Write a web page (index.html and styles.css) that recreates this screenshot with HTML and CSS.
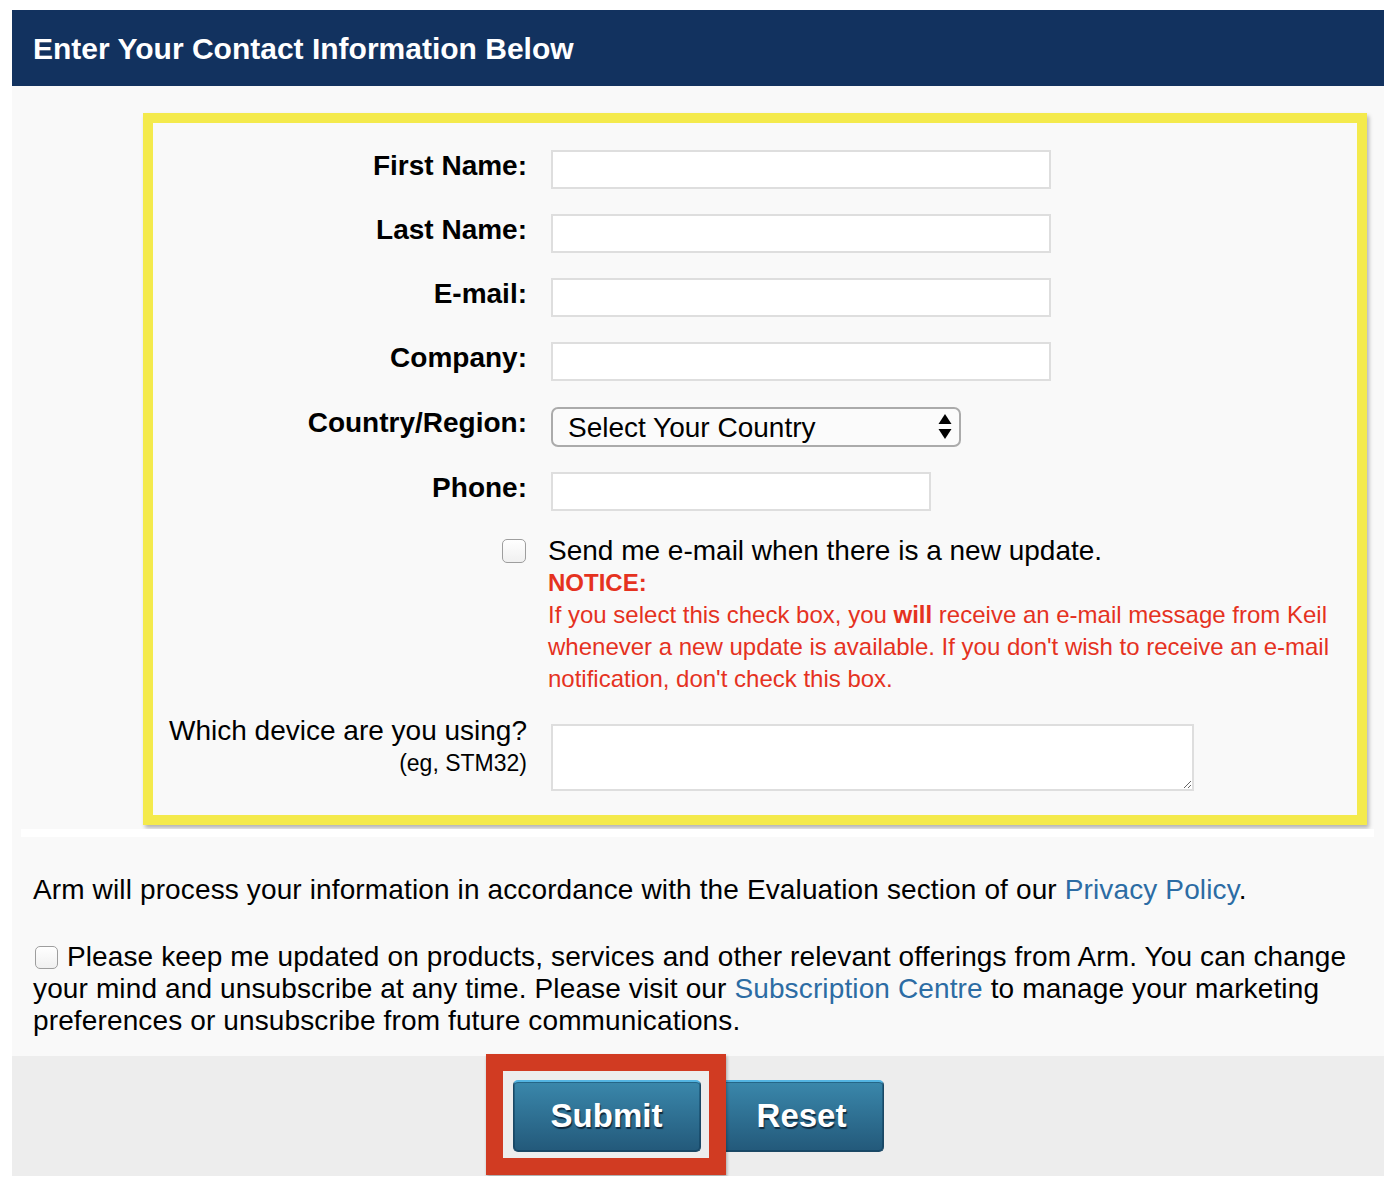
FILE: index.html
```html
<!DOCTYPE html>
<html lang="en">
<head>
<meta charset="utf-8">
<title>Contact Information</title>
<link rel="stylesheet" href="styles.css">
</head>
<body>
<div class="page">
  <div class="header"><h1 class="title">Enter Your Contact Information Below</h1></div>
  <div class="content">
    <div class="form-area">
      <div class="highlight">
        <div class="row">
          <label class="label" for="fn">First Name:</label>
          <input id="fn" class="text-input" type="text">
        </div>
        <div class="row">
          <label class="label" for="ln">Last Name:</label>
          <input id="ln" class="text-input" type="text">
        </div>
        <div class="row">
          <label class="label" for="em">E-mail:</label>
          <input id="em" class="text-input" type="text">
        </div>
        <div class="row">
          <label class="label" for="co">Company:</label>
          <input id="co" class="text-input" type="text">
        </div>
        <div class="row row-select">
          <label class="label" for="cr">Country/Region:</label>
          <div class="select-wrap">
            <select id="cr" class="select"><option>Select Your Country</option></select>
            <svg class="select-arrows" width="14" height="26" viewBox="0 0 14 26"><path d="M7 0 L13.5 10 L0.5 10 Z" fill="#000"/><path d="M0.5 15 L13.5 15 L7 25 Z" fill="#000"/></svg>
          </div>
        </div>
        <div class="row">
          <label class="label" for="ph">Phone:</label>
          <input id="ph" class="text-input phone" type="text">
        </div>
        <div class="row row-check">
          <div class="label check-cell"><input class="checkbox" type="checkbox" id="upd"></div>
          <div class="check-text">
            <label class="check-label" for="upd">Send me e-mail when there is a new update.</label>
            <div class="notice-title">NOTICE:</div>
            <div class="notice">If you select this check box, you <b>will</b> receive an e-mail message from Keil whenever a new update is available. If you don't wish to receive an e-mail notification, don't check this box.</div>
          </div>
        </div>
        <div class="row row-device">
          <label class="label device-label" for="dv">Which device are you using?<span class="hint">(eg, STM32)</span></label>
          <textarea id="dv" class="textarea"></textarea>
        </div>
      </div>
      <div class="white-strip"></div>
    </div>
    <p class="policy">Arm will process your information in accordance with the Evaluation section of our <a class="link" href="#">Privacy Policy</a>.</p>
    <p class="consent"><input class="checkbox small" type="checkbox"> Please keep me updated on products, services and other relevant offerings from Arm. You can change your mind and unsubscribe at any time. Please visit our <a class="link" href="#">Subscription Centre</a> to manage your marketing preferences or unsubscribe from future communications.</p>
  </div>
  <div class="footer">
    <div class="submit-wrap">
      <button class="btn btn-submit" type="button">Submit</button>
      <div class="red-box"></div>
    </div>
    <button class="btn btn-reset" type="button">Reset</button>
  </div>
</div>
</body>
</html>
```

FILE: styles.css
```css
html, body {
  margin: 0;
  padding: 0;
  background: #ffffff;
}

body {
  font-family: "Liberation Sans", Arial, Helvetica, sans-serif;
  color: #000;
}

.page {
  width: 1372px;
  margin: 10px 0 0 12px;
}

.header {
  background: #12325f;
  height: 76px;
  padding-left: 21px;
}

.title {
  margin: 0;
  color: #fff;
  font-size: 30px;
  font-weight: bold;
  line-height: 78px;
}

.content {
  background: #f9f9f9;
  padding: 27px 21px 19px 21px;
}

.form-area {
  margin: 0 -11px 0 -12px;
}

.highlight {
  margin-left: 122px;
  width: 1224px;
  box-sizing: border-box;
  border: 10px solid #f4ea4c;
  padding: 27px 0 24px 0;
  background: #f9f9f9;
  box-shadow: 2px 3px 4px rgba(0, 0, 0, 0.28);
}

.white-strip {
  margin-top: 4px;
  height: 8px;
  background: #ffffff;
}

.row {
  display: flex;
  align-items: flex-start;
  gap: 24px;
}

.row + .row {
  margin-top: 25px;
}

.row.row-select {
  margin-top: 26px;
}

.row.row-check {
  margin-top: 24px;
}

.row.row-device {
  margin-top: 20px;
}

.label {
  flex: none;
  width: 374px;
  text-align: right;
  font-weight: bold;
  font-size: 28px;
  line-height: 32px;
}

.text-input {
  box-sizing: border-box;
  width: 500px;
  height: 39px;
  border: 2px solid #dedede;
  background: #fff;
  margin: 0;
  padding: 0 8px;
  font-size: 24px;
  font-family: inherit;
  outline: none;
}

.text-input.phone {
  width: 380px;
}

.select-wrap {
  position: relative;
  width: 410px;
  height: 40px;
}

.select {
  -webkit-appearance: none;
  appearance: none;
  box-sizing: border-box;
  width: 410px;
  height: 40px;
  margin: 0;
  border: 2px solid #ababab;
  border-radius: 7px;
  background: #fbfbfb;
  padding: 0 0 0 15px;
  font-family: inherit;
  font-size: 28px;
  color: #000;
  outline: none;
}

.select-arrows {
  position: absolute;
  right: 9px;
  top: 7px;
  pointer-events: none;
}

.check-cell {
  display: flex;
  justify-content: flex-end;
  padding-top: 4px;
}

.checkbox {
  -webkit-appearance: none;
  appearance: none;
  box-sizing: border-box;
  width: 24px;
  height: 24px;
  margin: 0 1px 0 0;
  border: 1px solid #9e9e9e;
  border-radius: 5px;
  background: linear-gradient(#ffffff, #f0f0f0);
  display: block;
}

.check-text {
  flex: 1;
  margin-left: -3px;
  padding-right: 20px;
}

.check-label {
  display: block;
  font-size: 28px;
  line-height: 32px;
}

.notice-title {
  color: #e5321f;
  font-weight: bold;
  font-size: 24px;
  line-height: 32px;
}

.notice {
  color: #e5321f;
  font-size: 24px;
  line-height: 32px;
}

.notice b {
  font-weight: bold;
}

.device-label {
  font-weight: normal;
}

.hint {
  display: block;
  font-size: 23px;
  line-height: 32px;
}

.textarea {
  box-sizing: border-box;
  width: 643px;
  height: 67px;
  margin: 9px 0 0 0;
  border: 2px solid #dedede;
  background: #fff;
  font-family: inherit;
  font-size: 24px;
  outline: none;
}

.policy {
  margin: 37px 0 0 0;
  font-size: 28px;
  line-height: 32px;
  letter-spacing: 0.13px;
}

.consent {
  margin: 35px 0 0 0;
  font-size: 28px;
  line-height: 32px;
  letter-spacing: 0.13px;
}

.checkbox.small {
  display: inline-block;
  width: 23px;
  height: 23px;
  margin: 0 1px 0 2px;
  vertical-align: -3px;
}

.link {
  color: #2c6ca4;
  text-decoration: none;
}

.footer {
  background: #ededed;
  height: 120px;
  box-sizing: border-box;
  padding-top: 24px;
  display: flex;
  justify-content: center;
  gap: 19px;
}

.submit-wrap {
  position: relative;
}

.btn {
  box-sizing: border-box;
  height: 72px;
  margin: 0;
  border: 1px solid #1c4864;
  border-top: 2px solid #53b4e2;
  border-radius: 5px;
  background: linear-gradient(#3a87ab, #23597a);
  color: #fff;
  font-family: inherit;
  font-weight: bold;
  font-size: 33px;
  text-shadow: 1px 2px 1px #0f2a3e;
  box-shadow: inset 0 0 0 1px rgba(0, 40, 70, 0.35);
  padding: 0 0 2px 0;
}

.btn-submit {
  width: 188px;
  display: block;
}

.btn-reset {
  width: 164px;
}

.red-box {
  position: absolute;
  left: -27px;
  top: -26px;
  width: 240px;
  height: 121px;
  box-sizing: border-box;
  border: 17px solid #d13b22;
  box-shadow: 1px 2px 3px rgba(0, 0, 0, 0.3);
  pointer-events: none;
}
```
